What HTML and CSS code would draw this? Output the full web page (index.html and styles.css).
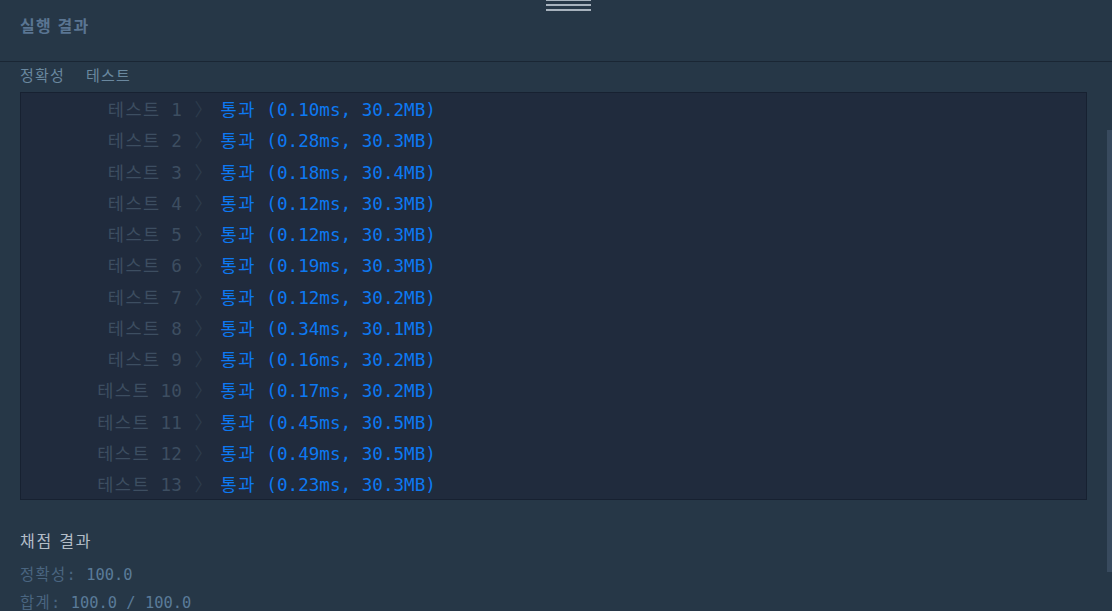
FILE: index.html
```html
<!DOCTYPE html>
<html lang="ko">
<head>
<meta charset="utf-8">
<title>실행 결과</title>
<link rel="stylesheet" href="styles.css">
</head>
<body>
<div class="panel">
  <div class="handle"><span></span><span></span><span></span></div>
  <header class="panel-header">
    <h2 class="title">실행 결과</h2>
  </header>
  <div class="content">
    <div class="tabs">
      <span class="tab">정확성</span>
      <span class="tab">테스트</span>
    </div>
    <div class="results">
      <div class="row"><span class="label"><span class="ko">테스트</span> 1 <span class="chev">〉</span></span><span class="res"><span class="ko">통과</span> (0.10ms, 30.2MB)</span></div>
      <div class="row"><span class="label"><span class="ko">테스트</span> 2 <span class="chev">〉</span></span><span class="res"><span class="ko">통과</span> (0.28ms, 30.3MB)</span></div>
      <div class="row"><span class="label"><span class="ko">테스트</span> 3 <span class="chev">〉</span></span><span class="res"><span class="ko">통과</span> (0.18ms, 30.4MB)</span></div>
      <div class="row"><span class="label"><span class="ko">테스트</span> 4 <span class="chev">〉</span></span><span class="res"><span class="ko">통과</span> (0.12ms, 30.3MB)</span></div>
      <div class="row"><span class="label"><span class="ko">테스트</span> 5 <span class="chev">〉</span></span><span class="res"><span class="ko">통과</span> (0.12ms, 30.3MB)</span></div>
      <div class="row"><span class="label"><span class="ko">테스트</span> 6 <span class="chev">〉</span></span><span class="res"><span class="ko">통과</span> (0.19ms, 30.3MB)</span></div>
      <div class="row"><span class="label"><span class="ko">테스트</span> 7 <span class="chev">〉</span></span><span class="res"><span class="ko">통과</span> (0.12ms, 30.2MB)</span></div>
      <div class="row"><span class="label"><span class="ko">테스트</span> 8 <span class="chev">〉</span></span><span class="res"><span class="ko">통과</span> (0.34ms, 30.1MB)</span></div>
      <div class="row"><span class="label"><span class="ko">테스트</span> 9 <span class="chev">〉</span></span><span class="res"><span class="ko">통과</span> (0.16ms, 30.2MB)</span></div>
      <div class="row"><span class="label"><span class="ko">테스트</span> 10 <span class="chev">〉</span></span><span class="res"><span class="ko">통과</span> (0.17ms, 30.2MB)</span></div>
      <div class="row"><span class="label"><span class="ko">테스트</span> 11 <span class="chev">〉</span></span><span class="res"><span class="ko">통과</span> (0.45ms, 30.5MB)</span></div>
      <div class="row"><span class="label"><span class="ko">테스트</span> 12 <span class="chev">〉</span></span><span class="res"><span class="ko">통과</span> (0.49ms, 30.5MB)</span></div>
      <div class="row"><span class="label"><span class="ko">테스트</span> 13 <span class="chev">〉</span></span><span class="res"><span class="ko">통과</span> (0.23ms, 30.3MB)</span></div>
    </div>
    <div class="summary">
      <h3 class="summary-title">채점 결과</h3>
      <div class="score"><span class="k">정확성:</span><span class="v"> 100.0</span></div>
      <div class="score"><span class="k">합계:</span><span class="v"> 100.0 / 100.0</span></div>
    </div>
  </div>
  <div class="scroll-thumb"></div>
</div>
</body>
</html>
```
FILE: styles.css
```css
* { box-sizing: border-box; }
html, body {
  margin: 0;
  padding: 0;
  height: 100%;
  overflow: hidden;
  background: #263747;
}
body {
  font-family: "Noto Sans CJK KR", "Noto Sans", sans-serif;
}
.panel {
  position: relative;
  height: 611px;
  overflow: hidden;
}
.handle {
  position: absolute;
  top: -1px;
  left: 546px;
  width: 45px;
  display: flex;
  flex-direction: column;
  gap: 3px;
}
.handle span {
  display: block;
  height: 2px;
  background: #a7b2bd;
}
.panel-header {
  height: 62px;
  padding: 14px 20px 0;
  border-bottom: 1px solid #1a2634;
}
.title {
  margin: 0;
  font-size: 16px;
  line-height: 22px;
  font-weight: 700;
  letter-spacing: 1.2px;
  color: #5a7592;
}
.content {
  padding: 0 25px 0 20px;
}
.tabs {
  display: flex;
  gap: 21px;
  margin: 3px 0 7px;
  font-size: 15px;
  line-height: 20px;
  letter-spacing: 1.2px;
  color: #6a889f;
}
.results {
  background: #202b3d;
  border: 1px solid #172131;
  font-family: "DejaVu Sans Mono", "Noto Sans CJK KR", monospace;
  font-size: 17.6px;
}
.row {
  display: flex;
  height: 31.25px;
  align-items: center;
  white-space: pre;
}
.ko {
  letter-spacing: 1.4px;
}
.label {
  width: 189px;
  text-align: right;
  color: #3d4e61;
}
.chev {
  display: inline-block;
  padding-left: 2px;
  width: 17.6px;
  color: #2d3b4c;
}
.res {
  padding-left: 10.6px;
  color: #0d79f2;
}
.summary {
  padding-top: 29px;
}
.summary-title {
  margin: 0 0 10px;
  font-size: 16px;
  line-height: 22px;
  font-weight: 400;
  letter-spacing: 1.8px;
  color: #b3bdc7;
}
.score {
  font-family: "DejaVu Sans Mono", "Noto Sans CJK KR", monospace;
  font-size: 15.4px;
  line-height: 28px;
  white-space: pre;
}
.score .k { color: #4a6580; letter-spacing: 1.3px; }
.score .v { color: #5a7b99; }
.scroll-thumb {
  position: absolute;
  left: 1107px;
  top: 130px;
  width: 5px;
  height: 442px;
  background: #384a5e;
}
```
